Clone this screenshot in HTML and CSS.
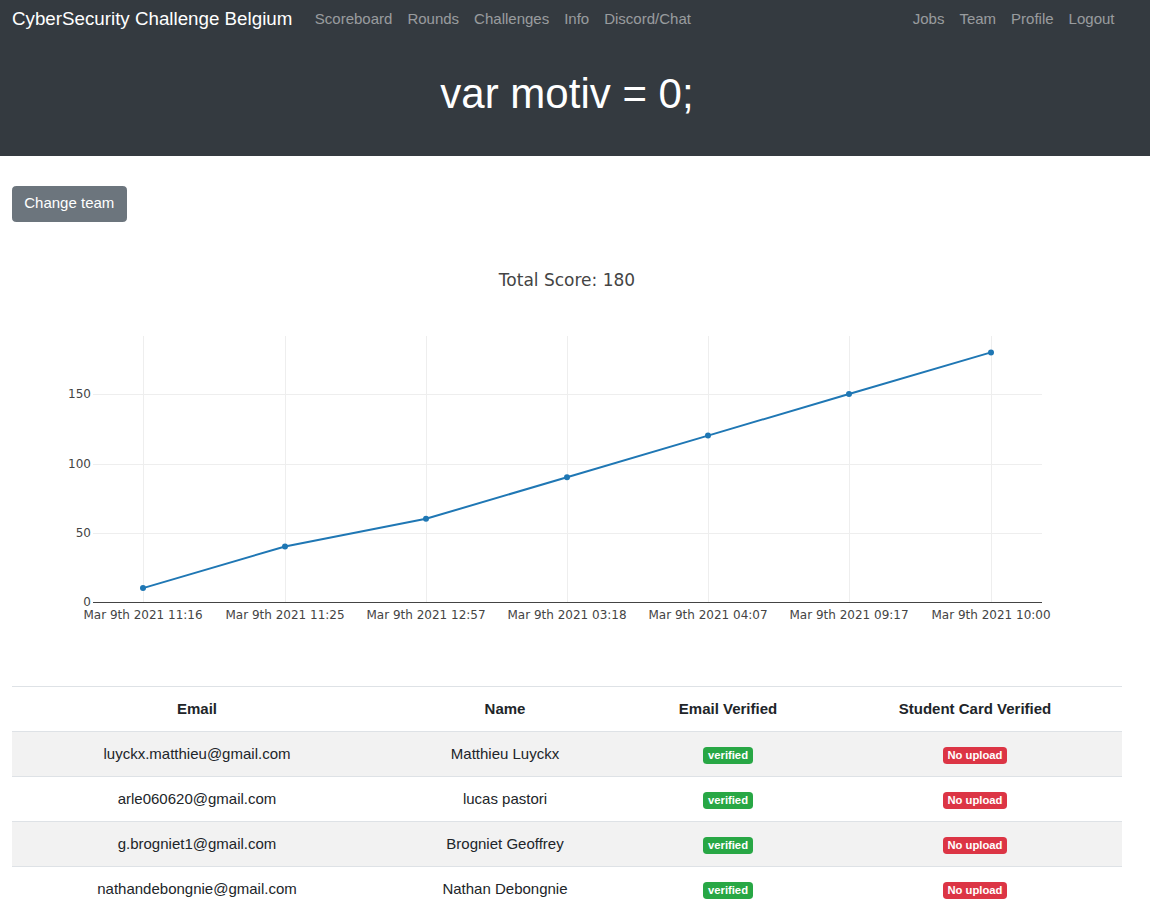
FILE: index.html
```html
<!DOCTYPE html>
<html lang="en">
<head>
<meta charset="utf-8">
<title>Team - CyberSecurity Challenge Belgium</title>
<link rel="stylesheet" href="styles.css">
</head>
<body>
<header class="topbar">
  <nav class="navbar">
    <a class="brand" href="#">CyberSecurity Challenge Belgium</a>
    <ul class="nav-links">
      <li><a href="#">Scoreboard</a></li>
      <li><a href="#">Rounds</a></li>
      <li><a href="#">Challenges</a></li>
      <li><a href="#">Info</a></li>
      <li><a href="#">Discord/Chat</a></li>
    </ul>
    <ul class="nav-links nav-right">
      <li><a href="#">Jobs</a></li>
      <li><a href="#">Team</a></li>
      <li><a href="#">Profile</a></li>
      <li><a href="#">Logout</a></li>
    </ul>
  </nav>
  <div class="hero">
    <h1>var motiv = 0;</h1>
  </div>
</header>

<main class="main">
  <div class="actions">
    <a class="btn" href="#">Change team</a>
  </div>

  <svg class="chart" width="1110" height="400" viewBox="0 0 1110 400" xmlns="http://www.w3.org/2000/svg">
    <text x="555" y="40" text-anchor="middle" class="chart-title">Total Score: 180</text>
    <g stroke="#eeeeee" stroke-width="1">
      <line x1="131.5" y1="90" x2="131.5" y2="356"/>
      <line x1="273.5" y1="90" x2="273.5" y2="356"/>
      <line x1="414.5" y1="90" x2="414.5" y2="356"/>
      <line x1="555.5" y1="90" x2="555.5" y2="356"/>
      <line x1="696.5" y1="90" x2="696.5" y2="356"/>
      <line x1="837.5" y1="90" x2="837.5" y2="356"/>
      <line x1="979.5" y1="90" x2="979.5" y2="356"/>
      <line x1="81" y1="148.5" x2="1030" y2="148.5"/>
      <line x1="81" y1="218.5" x2="1030" y2="218.5"/>
      <line x1="81" y1="287.5" x2="1030" y2="287.5"/>
    </g>
    <line x1="81" y1="356.5" x2="1030" y2="356.5" stroke="#444444" stroke-width="1"/>
    <g class="tick" text-anchor="end">
      <text x="79" y="152">150</text>
      <text x="79" y="222">100</text>
      <text x="79" y="291">50</text>
      <text x="79" y="360">0</text>
    </g>
    <g class="tick" text-anchor="middle">
      <text x="131" y="373">Mar 9th 2021 11:16</text>
      <text x="273" y="373">Mar 9th 2021 11:25</text>
      <text x="414" y="373">Mar 9th 2021 12:57</text>
      <text x="555" y="373">Mar 9th 2021 03:18</text>
      <text x="696" y="373">Mar 9th 2021 04:07</text>
      <text x="837" y="373">Mar 9th 2021 09:17</text>
      <text x="979" y="373">Mar 9th 2021 10:00</text>
    </g>
    <polyline fill="none" stroke="#1f77b4" stroke-width="2" stroke-linejoin="round"
      points="131,342.1 273,300.5 414,272.8 555,231.2 696,189.6 837,148 979,106.4"/>
    <g fill="#1f77b4">
      <circle cx="131" cy="342.1" r="3"/>
      <circle cx="273" cy="300.5" r="3"/>
      <circle cx="414" cy="272.8" r="3"/>
      <circle cx="555" cy="231.2" r="3"/>
      <circle cx="696" cy="189.6" r="3"/>
      <circle cx="837" cy="148" r="3"/>
      <circle cx="979" cy="106.4" r="3"/>
    </g>
  </svg>

  <table class="members">
    <colgroup>
      <col class="c-email">
      <col class="c-name">
      <col class="c-ver">
      <col class="c-card">
    </colgroup>
    <thead>
      <tr>
        <th>Email</th>
        <th>Name</th>
        <th>Email Verified</th>
        <th>Student Card Verified</th>
      </tr>
    </thead>
    <tbody>
      <tr>
        <td>luyckx.matthieu@gmail.com</td>
        <td>Matthieu Luyckx</td>
        <td><span class="badge badge-success">verified</span></td>
        <td><span class="badge badge-danger">No upload</span></td>
      </tr>
      <tr>
        <td>arle060620@gmail.com</td>
        <td>lucas pastori</td>
        <td><span class="badge badge-success">verified</span></td>
        <td><span class="badge badge-danger">No upload</span></td>
      </tr>
      <tr>
        <td>g.brogniet1@gmail.com</td>
        <td>Brogniet Geoffrey</td>
        <td><span class="badge badge-success">verified</span></td>
        <td><span class="badge badge-danger">No upload</span></td>
      </tr>
      <tr>
        <td>nathandebongnie@gmail.com</td>
        <td>Nathan Debongnie</td>
        <td><span class="badge badge-success">verified</span></td>
        <td><span class="badge badge-danger">No upload</span></td>
      </tr>
    </tbody>
  </table>
</main>
</body>
</html>
```

FILE: styles.css
```css
html, body {
  margin: 0;
  padding: 0;
}

body {
  font-family: "Liberation Sans", Arial, sans-serif;
  font-size: 15px;
  line-height: 1.5;
  color: #212529;
  background: #fff;
}

a {
  text-decoration: none;
}

.topbar {
  background: #343a40;
}

.navbar {
  display: flex;
  align-items: center;
  height: 38px;
  padding: 0 28px 0 12px;
}

.brand {
  color: #fff;
  font-size: 18.75px;
  line-height: 1.5;
  margin-right: 15px;
  white-space: nowrap;
}

.nav-links {
  display: flex;
  list-style: none;
  margin: 0;
  padding: 0;
}

.nav-links a {
  display: block;
  padding: 0 7.5px;
  color: rgba(255, 255, 255, 0.5);
  font-size: 15px;
}

.nav-right {
  margin-left: auto;
}

.hero {
  padding: 31px 28px 37px 12px;
  text-align: center;
}

.hero h1 {
  margin: 0;
  color: #fff;
  font-size: 42px;
  font-weight: 400;
  line-height: 50px;
}

.main {
  padding: 30px 28px 0 12px;
}

.actions {
  display: flex;
}

.btn {
  display: inline-block;
  background: #6c757d;
  border: 1px solid #6c757d;
  color: #fff;
  font-size: 15px;
  line-height: 1.5;
  padding: 5px 11.25px 6.25px;
  border-radius: 3.75px;
}

.chart {
  display: block;
  margin-top: 24px;
}

.chart-title {
  font-family: "DejaVu Sans", Verdana, sans-serif;
  font-size: 17px;
  fill: #444444;
}

.tick text {
  font-family: "DejaVu Sans", Verdana, sans-serif;
  font-size: 12px;
  fill: #444444;
}

.members {
  width: 100%;
  table-layout: fixed;
  border-collapse: collapse;
  margin-top: 40px;
}

.c-email { width: 370px; }
.c-name { width: 246px; }
.c-ver { width: 200px; }
.c-card { width: 294px; }

.members th,
.members td {
  padding: 10.75px 11.25px;
  text-align: center;
  border-top: 1px solid #dee2e6;
  vertical-align: top;
}

.members th {
  font-weight: 700;
}

.members tbody tr:nth-child(odd) {
  background: #f2f2f2;
}

.badge {
  display: inline-block;
  padding: 0.25em 0.4em;
  font-size: 75%;
  font-weight: 700;
  line-height: 1;
  border-radius: 3.75px;
  color: #fff;
  vertical-align: baseline;
  white-space: nowrap;
}

.badge-success {
  background: #28a745;
}

.badge-danger {
  background: #dc3545;
}
```
